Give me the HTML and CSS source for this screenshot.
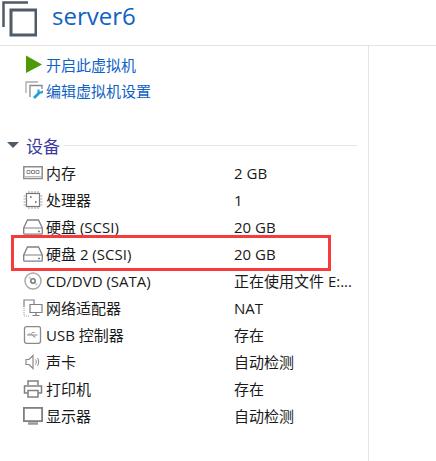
FILE: index.html
```html
<!DOCTYPE html>
<html lang="en">
<head>
    <meta charset="UTF-8">
    <title>server6</title>
    <link rel="stylesheet" href="styles.css">
</head>
<body>
    <!-- Title bar -->
    <div class="header">
        <svg class="vm-icon" width="36" height="37" viewBox="0 0 36 37" fill="none">
            <path d="M2.500 27V2.500H27" stroke="#4f5b66" stroke-width="2.500"/>
            <rect x="10" y="10" width="25" height="25" stroke="#4f5b66" stroke-width="3"/>
        </svg>
        <span class="vm-name">server6</span>
    </div>

    <div class="panel">
        <!-- Actions -->
        <div class="actions">
            <div class="action">
                <svg width="18" height="18" viewBox="0 0 18 18"><path d="M1 0.500L17 9.500L1 18Z" fill="#4e9a06"/></svg>
                <span>开启此虚拟机</span>
            </div>
            <div class="action">
                <svg width="18" height="18" viewBox="0 0 18 18" fill="none">
                    <path d="M1 12V1H13" stroke="#aaa" stroke-width="1.300"/>
                    <path d="M5 16V4.500H17V8" stroke="#888" stroke-width="1.300"/>
                    <path d="M9 17L14.500 11.500" stroke="#1a9fd6" stroke-width="2.600"/>
                    <path d="M13.500 8.500V11.500H16.500L18 10" stroke="#1a9fd6" stroke-width="2"/>
                </svg>
                <span>编辑虚拟机设置</span>
            </div>
        </div>

        <!-- Devices -->
        <div class="section">
            <span class="arrow"></span>
            <span class="section-title">设备</span>
            <span class="section-line"></span>
        </div>

        <div class="device-list">
            <div class="device">
                <svg width="20" height="16" viewBox="0 0 20 16" fill="none" stroke="#8c8c8c" stroke-width="1.500">
                    <path d="M0.800 1.800H19.200V13.500H0.800Z"/>
                    <path d="M4 5.500h3v3H4zM8.500 5.500h3v3h-3zM13 5.500h3v3h-3z" stroke-width="1"/>
                    <path d="M2 11.500h16" stroke="#bbb" stroke-width="1"/>
                </svg>
                <span class="device-name">内存</span>
                <span class="device-value">2 GB</span>
            </div>
            <div class="device">
                <svg width="20" height="18" viewBox="0 0 20 18" fill="none" stroke="#777" stroke-width="1.200">
                    <rect x="3.500" y="2.500" width="13" height="13"/>
                    <path d="M6 0v2M9 0v2M12 0v2M15 0v2M6 16v2M9 16v2M12 16v2M15 16v2M0.500 5h3M0.500 8h3M0.500 11h3M0.500 14h3M16.500 5h3M16.500 8h3M16.500 11h3M16.500 14h3" stroke="#aaa"/>
                    <path d="M7 6h1.500M12 11h1.500" stroke="#555" stroke-width="1.500"/>
                </svg>
                <span class="device-name">处理器</span>
                <span class="device-value">1</span>
            </div>
            <div class="device">
                <svg width="20" height="16" viewBox="0 0 20 16" fill="none" stroke="#808080" stroke-width="1.300">
                    <path d="M4.500 1h11l3.800 8v5.200a1 1 0 0 1-1 1H1.700a1 1 0 0 1-1-1V9z"/>
                    <path d="M1 9h18" stroke-width="1"/>
                    <path d="M15 12.500h2" stroke-width="1.500"/>
                </svg>
                <span class="device-name">硬盘 (SCSI)</span>
                <span class="device-value">20 GB</span>
            </div>
            <div class="device">
                <svg width="20" height="16" viewBox="0 0 20 16" fill="none" stroke="#808080" stroke-width="1.300">
                    <path d="M4.500 1h11l3.800 8v5.200a1 1 0 0 1-1 1H1.700a1 1 0 0 1-1-1V9z"/>
                    <path d="M1 9h18" stroke-width="1"/>
                    <path d="M15 12.500h2" stroke-width="1.500"/>
                </svg>
                <span class="device-name">硬盘 2 (SCSI)</span>
                <span class="device-value">20 GB</span>
            </div>
            <div class="device">
                <svg width="20" height="18" viewBox="0 0 20 18" fill="none" stroke="#aaa" stroke-width="1.500">
                    <circle cx="10" cy="9" r="8"/>
                    <circle cx="10" cy="9" r="2.200" stroke="#777"/>
                    <path d="M6 5L7.500 6.500M12.500 11.500L14 13" stroke="#ccc" stroke-width="2"/>
                </svg>
                <span class="device-name">CD/DVD (SATA)</span>
                <span class="device-value">正在使用文件 E:...</span>
            </div>
            <div class="device">
                <svg width="20" height="18" viewBox="0 0 20 18" fill="none" stroke="#808080" stroke-width="1.200">
                    <path d="M1 8V1H11V5"/>
                    <path d="M7 5.500h12v8H7z" fill="#fff"/>
                    <path d="M13 13.500v2.500M9.500 16.500h7"/>
                    <path d="M1 9v8H7" stroke="#aaa" stroke-dasharray="1 1"/>
                </svg>
                <span class="device-name">网络适配器</span>
                <span class="device-value">NAT</span>
            </div>
            <div class="device">
                <svg width="20" height="18" viewBox="0 0 20 18" fill="none" stroke="#8a8a8a" stroke-width="1.300">
                    <rect x="1.500" y="0.700" width="16" height="16.600" rx="2"/>
                    <path d="M4.500 9h10M4.500 9l2-1.500M7.500 9l2-2.500h2M9.500 9l1.500 2h1.500" stroke-width="1"/>
                </svg>
                <span class="device-name">USB 控制器</span>
                <span class="device-value">存在</span>
            </div>
            <div class="device">
                <svg width="20" height="16" viewBox="0 0 20 16" fill="none" stroke="#8a8a8a" stroke-width="1.200">
                    <path d="M3 5.500v5h3l4 4V1.500l-4 4z"/>
                    <path d="M12.500 5.500c1 1.500 1 3.500 0 5M14.500 4c1.500 2.500 1.500 5.500 0 8" stroke-width="1"/>
                </svg>
                <span class="device-name">声卡</span>
                <span class="device-value">自动检测</span>
            </div>
            <div class="device">
                <svg width="20" height="18" viewBox="0 0 20 18" fill="none" stroke="#808080" stroke-width="1.500">
                    <path d="M5 5V1h10v4"/>
                    <path d="M5 13H1.500V6h17v7H15"/>
                    <rect x="5" y="10.500" width="10" height="6.500"/>
                </svg>
                <span class="device-name">打印机</span>
                <span class="device-value">存在</span>
            </div>
            <div class="device">
                <svg width="20" height="18" viewBox="0 0 20 18" fill="none" stroke="#808080" stroke-width="1.800">
                    <rect x="0.900" y="0.900" width="18.200" height="13.200"/>
                    <path d="M5 16.500h10" stroke-width="2.500" stroke="#999"/>
                </svg>
                <span class="device-name">显示器</span>
                <span class="device-value">自动检测</span>
            </div>
            <!-- red annotation round the second disk -->
            <div class="highlight"></div>
        </div>
    </div>
</body>
</html>
```

FILE: styles.css
```css
body {
    margin: 0;
    width: 436px;
    height: 461px;
    overflow: hidden;
    background-color: #fff;
    font-family: "Open Sans", "Noto Sans CJK SC", sans-serif;
    font-size: 15px;
    color: #1a1a1a;
}

.header {
    display: flex;
    align-items: flex-start;
    height: 45px;
    padding-left: 1px;
    border-bottom: 1px solid #e3e3e3;
}

.vm-icon {
    flex: none;
}

.vm-name {
    margin-left: 15px;
    font-size: 24px;
    line-height: 31px;
    color: #0f62c4;
}

.panel {
    width: 368px;
    height: 415px;
    border-right: 1px solid #e3e3e3;
}

.actions {
    display: flex;
    flex-direction: column;
    gap: 6px;
    padding: 8px 0 0 25px;
}

.action {
    display: flex;
    align-items: center;
    gap: 3px;
    height: 20px;
    color: #0f62c4;
}

.section {
    display: flex;
    align-items: center;
    height: 20px;
    margin-top: 35px;
    padding-left: 7px;
}

.arrow {
    width: 0;
    height: 0;
    border-left: 6px solid transparent;
    border-right: 6px solid transparent;
    border-top: 6px solid #4f5b66;
}

.section-title {
    margin-left: 7px;
    font-size: 17px;
    color: #3a3a9e;
}

.section-line {
    flex: 1;
    height: 1px;
    margin: 0 11px 0 4px;
    background-color: #e3e3e3;
}

.device-list {
    position: relative;
    margin-top: 4px;
}

.device {
    display: flex;
    align-items: center;
    height: 27px;
    padding-left: 23px;
}

.device svg {
    flex: none;
    width: 20px;
}

.device-name {
    width: 188px;
    margin-left: 3px;
    white-space: nowrap;
}

.device-value {
    white-space: nowrap;
}

.highlight {
    position: absolute;
    left: 11px;
    top: 76px;
    width: 314px;
    height: 30px;
    border: 3px solid #f73b3b;
}
```
